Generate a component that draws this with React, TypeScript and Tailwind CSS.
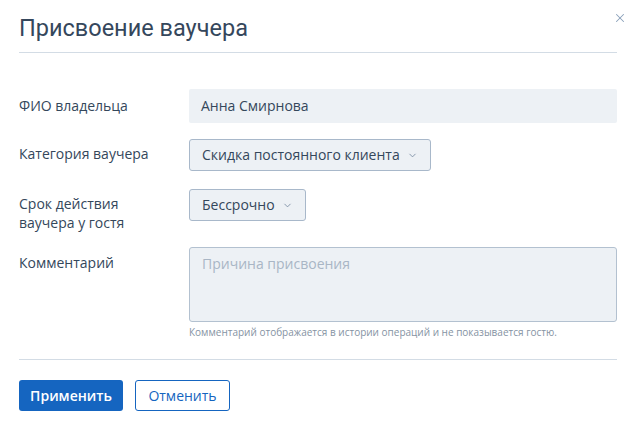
import { X, ChevronDown } from 'lucide-react';

export default function App() {
  return (
    <div className="w-[636px] h-[426px] bg-white relative font-['Open_Sans',sans-serif] text-[#34475b]">
      <button className="absolute right-[9px] top-[11px] text-[#8aa0ba]">
        <X size={14} strokeWidth={1.75} />
      </button>

      <div className="px-[19px]">
        {/* Header */}
        <div className="h-[53px] pt-[13px] border-b border-[#d3dce5]">
          <h1 className="font-['Roboto',sans-serif] text-[23.5px] leading-[30px] text-[#35475c]">
            Присвоение ваучера
          </h1>
        </div>

        {/* Form */}
        <div className="pt-[36px] text-[14px] leading-[20px]">
          <div className="flex">
            <div className="w-[170px] pt-[7px]">ФИО владельца</div>
            <div className="flex-1 h-[34px] bg-[#edf1f5] rounded-[2px] px-[12px] pt-[7px]">
              Анна Смирнова
            </div>
          </div>

          <div className="flex mt-[16px]">
            <div className="w-[170px] pt-[5px]">Категория ваучера</div>
            <button className="h-[32px] flex items-center gap-[7px] px-[12px] bg-[#edf1f5] border border-[#a8b8ca] rounded-[3px]">
              Скидка постоянного клиента
              <ChevronDown size={11} strokeWidth={1.75} className="text-[#70849c]" />
            </button>
          </div>

          <div className="flex mt-[18px]">
            <div className="w-[170px] pt-[5px] leading-[19px]">
              Срок действия
              <br />
              ваучера у гостя
            </div>
            <div>
              <button className="h-[32px] flex items-center gap-[7px] px-[12px] bg-[#edf1f5] border border-[#a8b8ca] rounded-[3px]">
                Бессрочно
                <ChevronDown size={11} strokeWidth={1.75} className="text-[#70849c]" />
              </button>
            </div>
          </div>

          <div className="flex mt-[15px]">
            <div className="w-[170px] pt-[6px]">Комментарий</div>
            <div className="flex-1">
              <div className="h-[75px] bg-[#edf1f5] border border-[#b3c1d0] rounded-[3px] px-[12px] pt-[6px] text-[#a9b6c5]">
                Причина присвоения
              </div>
              <div className="text-[10px] leading-[14px] text-[#8593a3] mt-[3px]">
                Комментарий отображается в истории операций и не показывается гостю.
              </div>
            </div>
          </div>
        </div>

        <div className="mt-[20px] border-t border-[#d3dce5]" />

        {/* Footer */}
        <div className="flex gap-[12px] pt-[20px] text-[14px]">
          <button className="h-[31px] w-[104px] bg-[#1565c0] text-white rounded-[3px] font-semibold">
            Применить
          </button>
          <button className="h-[31px] w-[95px] border border-[#1565c0] text-[#1565c0] rounded-[3px]">
            Отменить
          </button>
        </div>
      </div>
    </div>
  );
}
